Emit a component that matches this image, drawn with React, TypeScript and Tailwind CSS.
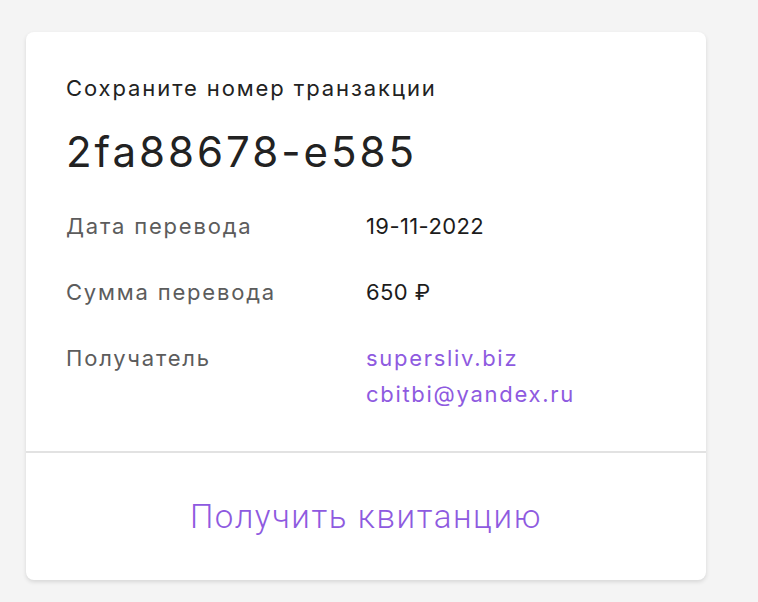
const ROWS = [
  { label: "Дата перевода", value: ["19-11-2022"], link: false },
  { label: "Сумма перевода", value: ["650 ₽"], link: false },
  { label: "Получатель", value: ["supersliv.biz", "cbitbi@yandex.ru"], link: true },
];

export default function App() {
  return (
    <div className="min-h-[602px] bg-[#f4f4f4] pl-[26px] pt-[32px] pb-[23px]" style={{ fontFamily: "Inter, 'Noto Sans', sans-serif" }}>
      <div className="w-[680px] rounded-[8px] bg-white shadow-[0_2px_4px_rgba(0,0,0,0.12)]">
        <div className="px-[40px] pt-[42px] pb-[39px]">
          <p className="text-[22px] leading-[28px] tracking-[1.9px] text-[#222]">Сохраните номер транзакции</p>
          <p className="mt-[26px] text-[42px] leading-[48px] tracking-[3px] text-[#222]">2fa88678-e585</p>

          <div className="mt-[32px] flex flex-col gap-[30px]">
            {ROWS.map((row) => (
              <div key={row.label} className="flex text-[22px] leading-[36px]">
                <span className="w-[300px] shrink-0 tracking-[1.8px] text-[#5c5c5c]">{row.label}</span>
                <div className="flex flex-col">
                  {row.value.map((v) => (
                    <span
                      key={v}
                      className={row.link ? "tracking-[1.7px] text-[#8e5ae0]" : "tracking-[0.4px] text-[#1c1c1c]"}
                    >
                      {v}
                    </span>
                  ))}
                </div>
              </div>
            ))}
          </div>
        </div>

        <div className="h-[2px] bg-[#e2e2e2]" />

        <button
          className="flex h-[127px] w-full items-center justify-center text-[33px] font-light tracking-[1.6px] text-[#8e5ae0]"
          style={{ fontFamily: "Roboto, sans-serif" }}
        >
          Получить квитанцию
        </button>
      </div>
    </div>
  );
}
